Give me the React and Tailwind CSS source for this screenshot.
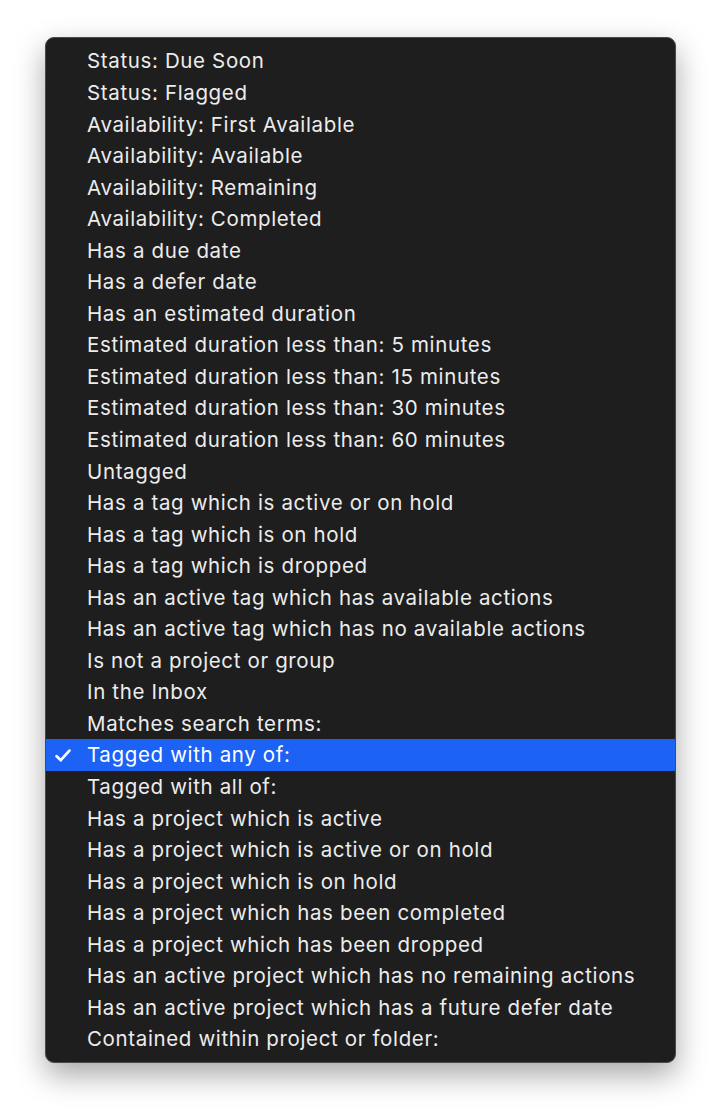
import React from "react";

const items = [
  "Status: Due Soon",
  "Status: Flagged",
  "Availability: First Available",
  "Availability: Available",
  "Availability: Remaining",
  "Availability: Completed",
  "Has a due date",
  "Has a defer date",
  "Has an estimated duration",
  "Estimated duration less than: 5 minutes",
  "Estimated duration less than: 15 minutes",
  "Estimated duration less than: 30 minutes",
  "Estimated duration less than: 60 minutes",
  "Untagged",
  "Has a tag which is active or on hold",
  "Has a tag which is on hold",
  "Has a tag which is dropped",
  "Has an active tag which has available actions",
  "Has an active tag which has no available actions",
  "Is not a project or group",
  "In the Inbox",
  "Matches search terms:",
  "Tagged with any of:",
  "Tagged with all of:",
  "Has a project which is active",
  "Has a project which is active or on hold",
  "Has a project which is on hold",
  "Has a project which has been completed",
  "Has a project which has been dropped",
  "Has an active project which has no remaining actions",
  "Has an active project which has a future defer date",
  "Contained within project or folder:",
];

const SELECTED = "Tagged with any of:";

const Check = () => (
  <svg width="16" height="13" viewBox="0 0 16 13" fill="none">
    <path
      d="M1.6 7.2 L5.8 11.2 L14.4 1.6"
      stroke="white"
      strokeWidth="2.7"
      strokeLinecap="round"
      strokeLinejoin="round"
    />
  </svg>
);

export default function App() {
  return (
    <div className="w-[720px] h-[1116px] bg-white pt-[37px] pl-[45px] font-['Inter','Helvetica_Neue','Liberation_Sans',sans-serif]">
      <div className="w-[631px] rounded-[9px] border border-[#4a4a4a] bg-[#1e1e1e] pt-[7px] pb-[7px] shadow-[0_12px_30px_rgba(0,0,0,0.35)] overflow-hidden">
        {items.map((label) => {
          const active = label === SELECTED;
          return (
            <div
              key={label}
              className={`h-[31.55px] pt-[2px] flex items-center text-[20.5px] tracking-[0.64px] text-[#ececec] ${
                active ? "bg-[#1b62f5] text-white" : ""
              }`}
            >
              <div className="w-[41px] flex justify-end pr-[16px]">
                {active && <Check />}
              </div>
              <span className="whitespace-nowrap">{label}</span>
            </div>
          );
        })}
      </div>
    </div>
  );
}
